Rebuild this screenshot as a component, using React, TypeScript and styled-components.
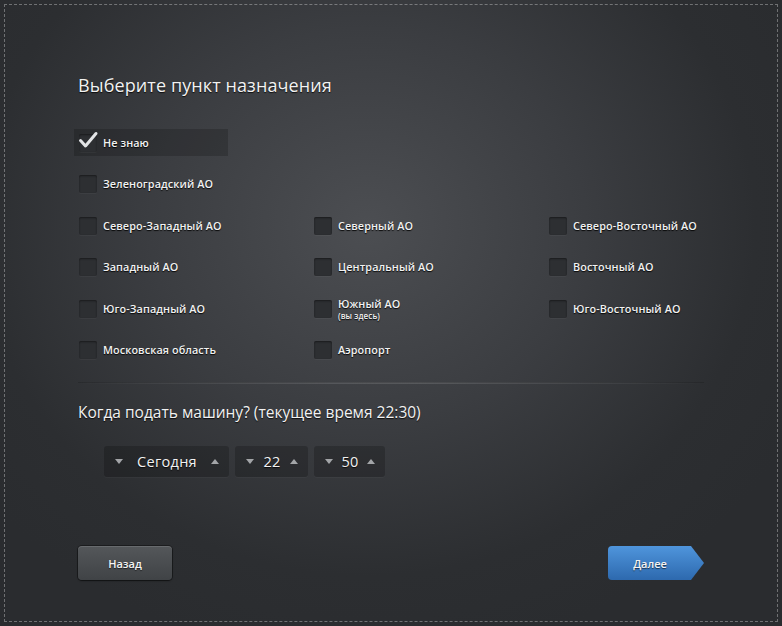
import { createGlobalStyle } from "styled-components";
import styled from "styled-components";

const GlobalStyle = createGlobalStyle`
    html, body {
        margin: 0;
        padding: 0;
    }
    body {
        font-family: "Open Sans", "DejaVu Sans", sans-serif;
        color: #f2f2f2;
    }
    * {
        box-sizing: border-box;
    }
`;

const Page = styled.div`
    width: 782px;
    height: 626px;
    padding: 4px;
    background: radial-gradient(ellipse 62% 70% at 47% 36%, #4c4e52 0%, #3b3d41 45%, #2c2e31 80%, #2a2c2f 100%);
`;

const Frame = styled.div`
    height: 100%;
    border: 1px dashed rgba(255, 255, 255, 0.32);
    padding: 67px 73px 41px 73px;
    display: flex;
    flex-direction: column;
`;

const Title = styled.h1`
    margin: 0;
    font-size: 18px;
    line-height: 26px;
    font-weight: 400;
    letter-spacing: 0.1px;
    text-shadow: 0 1px 1px rgba(0, 0, 0, 0.8);
`;

const Options = styled.div`
    margin-top: 24px;
    display: grid;
    grid-template-columns: 235px 235px 1fr;
    grid-auto-rows: 41.5px;
    align-items: center;
`;

const Option = styled.label<{ $checked?: boolean; $wide?: boolean }>`
    grid-column: ${(p) => (p.$wide ? "1 / -1" : "auto")};
    display: flex;
    align-items: center;
    gap: 6px;
    cursor: pointer;
    ${(p) =>
        p.$checked
            ? `
        width: 154px;
        height: 27px;
        margin-left: -4px;
        padding-left: 5px;
        background: rgba(0, 0, 0, 0.18);
    `
            : `padding-left: 1px;`}
`;

const Box = styled.span`
    position: relative;
    flex: none;
    width: 18px;
    height: 18px;
    border-radius: 2px;
    background: #2d2f32;
    box-shadow: inset 0 1px 2px rgba(0, 0, 0, 0.45), 0 1px 0 rgba(255, 255, 255, 0.04);
`;

const Tick = styled.svg`
    position: absolute;
    left: 0px;
    top: -3px;
    width: 18px;
    height: 18px;
    overflow: visible;
`;

const LabelText = styled.span`
    display: flex;
    flex-direction: column;
    font-size: 10.8px;
    font-weight: 600;
    line-height: 14px;
    letter-spacing: 0.1px;
    text-shadow: 0 1px 1px rgba(0, 0, 0, 0.9);
`;

const Note = styled.span`
    font-size: 8px;
    line-height: 9px;
    font-weight: 600;
`;

const Divider = styled.div`
    margin: 11px 0 0 0;
    height: 2px;
    background: linear-gradient(90deg, rgba(255, 255, 255, 0) 0%, rgba(255, 255, 255, 0.05) 12%, rgba(255, 255, 255, 0.12) 40%, rgba(255, 255, 255, 0.13) 55%, rgba(255, 255, 255, 0.05) 88%, rgba(255, 255, 255, 0) 100%);
    border-top: 1px solid rgba(0, 0, 0, 0.15);
`;

const Question = styled.h2`
    margin: 17px 0 0 0;
    font-size: 15.5px;
    line-height: 22px;
    font-weight: 400;
    text-shadow: 0 1px 1px rgba(0, 0, 0, 0.8);
`;

const Pickers = styled.div`
    margin: 23px 0 0 26px;
    display: flex;
    gap: 6px;
`;

const Picker = styled.div<{ $width: number }>`
    width: ${(p) => p.$width}px;
    height: 31px;
    padding: 0 10px 0 11px;
    display: flex;
    align-items: center;
    justify-content: space-between;
    border-radius: 3px;
    background: rgba(0, 0, 0, 0.2);
    box-shadow: 0 1px 0 rgba(255, 255, 255, 0.03);
`;

const Arrow = styled.span<{ $up?: boolean }>`
    width: 0;
    height: 0;
    border-left: 4px solid transparent;
    border-right: 4px solid transparent;
    ${(p) => (p.$up ? "border-bottom: 5px solid #a3a5a8;" : "border-top: 5px solid #a3a5a8;")}
`;

const PickerValue = styled.span`
    font-size: 14.5px;
    letter-spacing: 0.3px;
    text-shadow: 0 1px 1px rgba(0, 0, 0, 0.8);
`;

const Footer = styled.div`
    margin-top: auto;
    display: flex;
    justify-content: space-between;
`;

const Button = styled.button`
    height: 34px;
    border: none;
    font-family: inherit;
    font-size: 11px;
    font-weight: 600;
    color: #f4f4f4;
    text-shadow: 0 1px 1px rgba(0, 0, 0, 0.6);
    cursor: pointer;
`;

const BackButton = styled(Button)`
    width: 94px;
    border-radius: 4px;
    background: linear-gradient(#54575a, #404346);
    box-shadow: inset 0 1px 0 rgba(255, 255, 255, 0.12), 0 0 0 1px rgba(0, 0, 0, 0.35), 0 1px 2px rgba(0, 0, 0, 0.4);
`;

const NextButton = styled(Button)`
    width: 96px;
    padding: 0 12px 0 0;
    border-radius: 4px 0 0 4px;
    background: linear-gradient(#4f95dc, #2d69ae);
    clip-path: polygon(0 0, calc(100% - 13px) 0, 100% 50%, calc(100% - 13px) 100%, 0 100%);
`;

type Place = { name: string; note?: string };

const places: Place[] = [
    { name: "Северо-Западный АО" },
    { name: "Северный АО" },
    { name: "Северо-Восточный АО" },
    { name: "Западный АО" },
    { name: "Центральный АО" },
    { name: "Восточный АО" },
    { name: "Юго-Западный АО" },
    { name: "Южный АО", note: "(вы здесь)" },
    { name: "Юго-Восточный АО" },
    { name: "Московская область" },
    { name: "Аэропорт" },
];

const App = () => {
    return (
        <Page>
            <GlobalStyle />
            <Frame>
                <Title>Выберите пункт назначения</Title>
                <Options>
                    <Option $checked $wide>
                        <Box>
                            <Tick viewBox="0 0 18 18">
                                <path d="M1.5 9.5 L6.5 15 L17 2.5" fill="none" stroke="#e2e4e6" strokeWidth="3" strokeLinecap="round" strokeLinejoin="round" />
                            </Tick>
                        </Box>
                        <LabelText>Не знаю</LabelText>
                    </Option>
                    <Option $wide>
                        <Box />
                        <LabelText>Зеленоградский АО</LabelText>
                    </Option>
                    {places.map((place) => (
                        <Option key={place.name}>
                            <Box />
                            <LabelText>
                                {place.name}
                                {place.note && <Note>{place.note}</Note>}
                            </LabelText>
                        </Option>
                    ))}
                </Options>
                <Divider />
                <Question>Когда подать машину? (текущее время 22:30)</Question>
                <Pickers>
                    <Picker $width={125}>
                        <Arrow />
                        <PickerValue>Сегодня</PickerValue>
                        <Arrow $up />
                    </Picker>
                    <Picker $width={73}>
                        <Arrow />
                        <PickerValue>22</PickerValue>
                        <Arrow $up />
                    </Picker>
                    <Picker $width={71}>
                        <Arrow />
                        <PickerValue>50</PickerValue>
                        <Arrow $up />
                    </Picker>
                </Pickers>
                <Footer>
                    <BackButton>Назад</BackButton>
                    <NextButton>Далее</NextButton>
                </Footer>
            </Frame>
        </Page>
    );
};

export default App;
